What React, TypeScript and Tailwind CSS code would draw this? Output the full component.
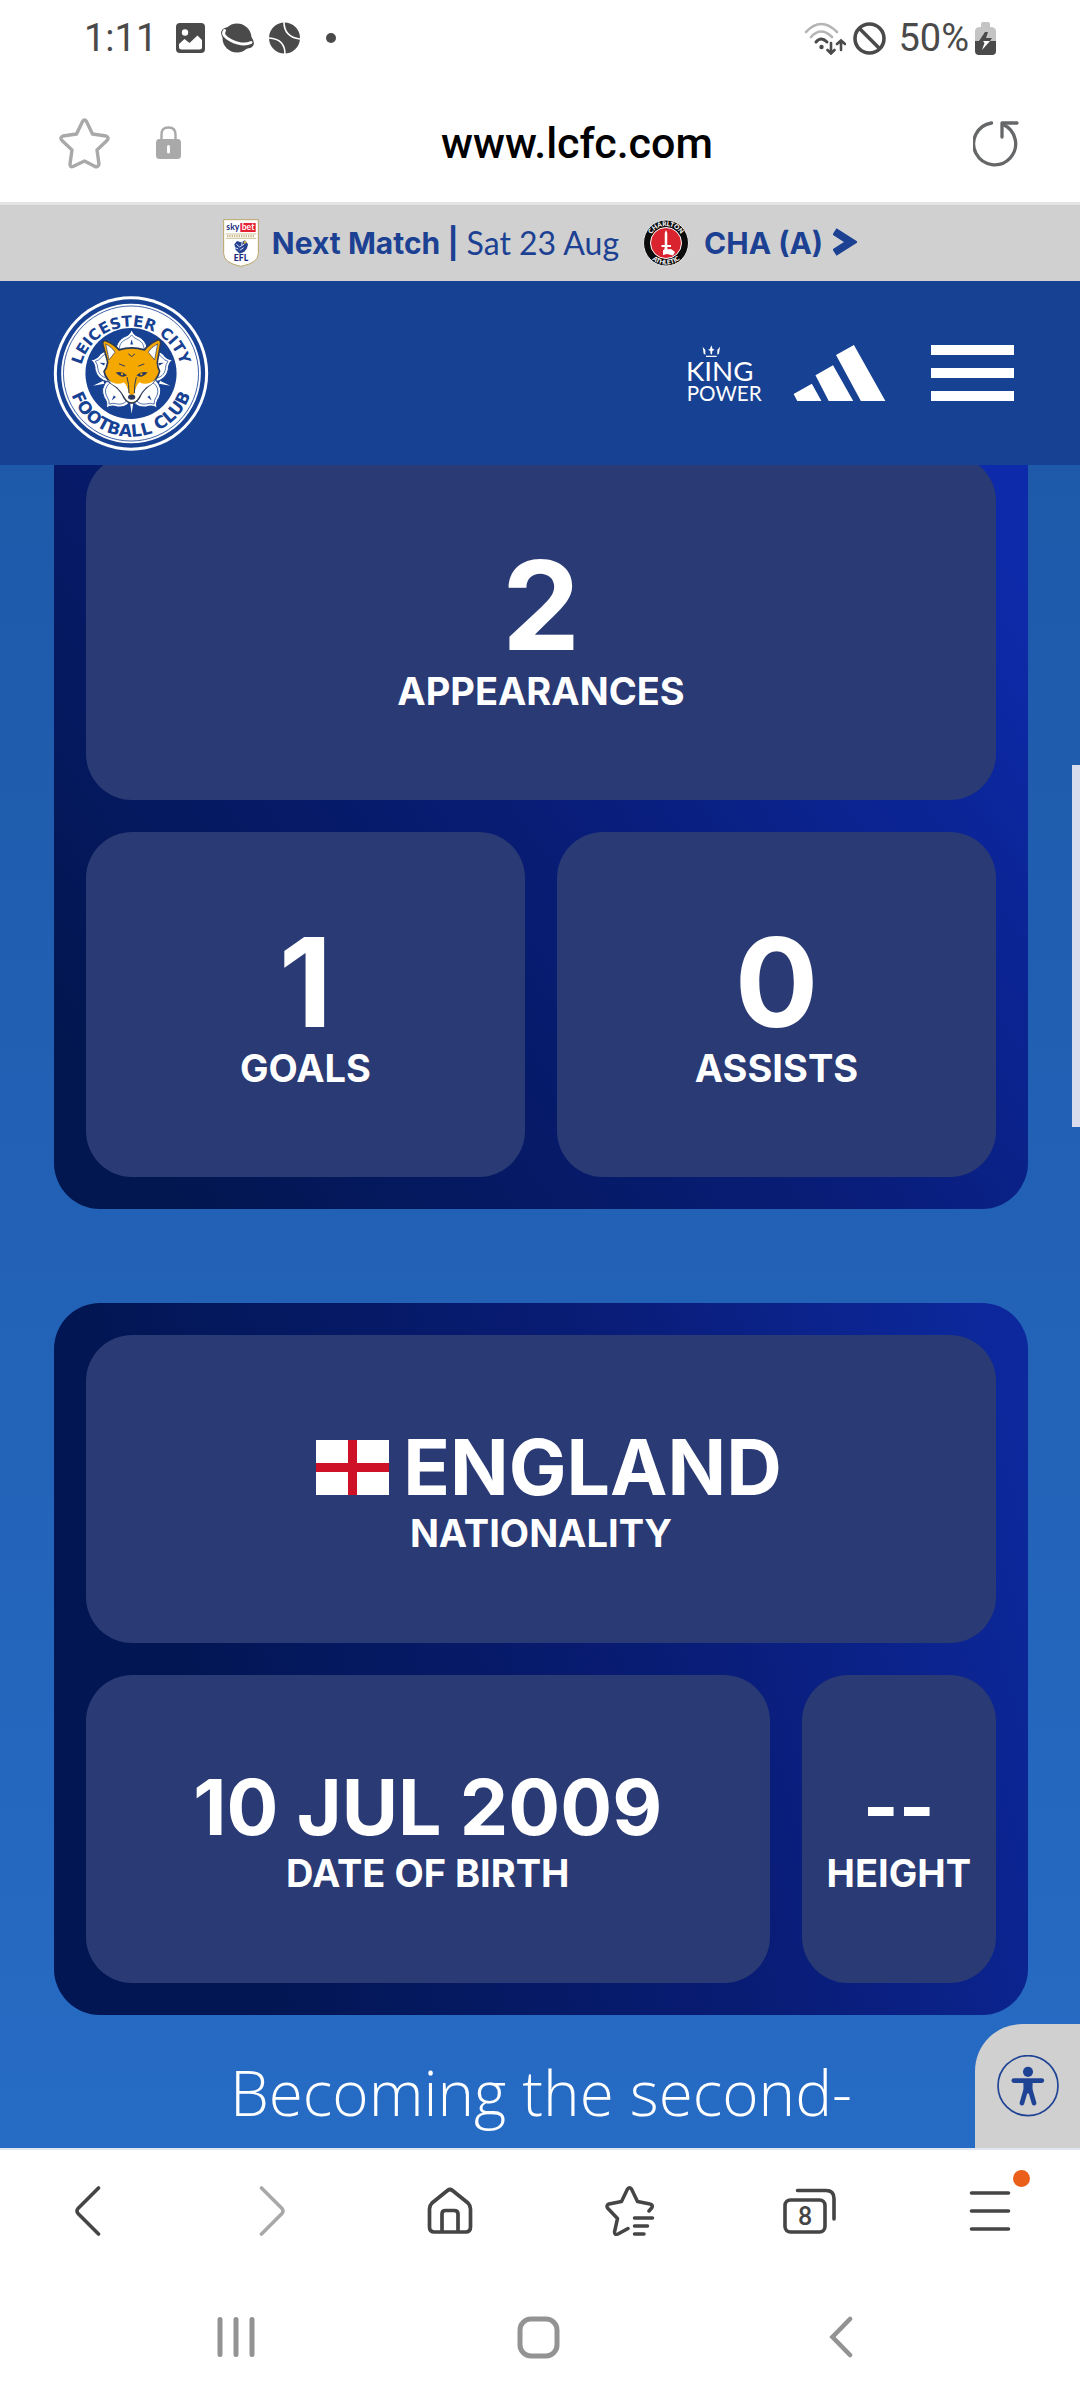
import type { ReactNode } from "react";

function StatusBar() {
  return (
    <div className="flex h-[84px] items-center justify-between bg-white pr-[84px] pb-2 pl-[84px] text-[38px] leading-none text-[#4a4a4a]">
      <div className="flex items-center">
        <span className="mr-[19px]">1:11</span>
        <svg width="29" height="30" viewBox="0 0 29 30" aria-hidden="true">
          <rect width="29" height="30" rx="4" fill="#4a4a4a" />
          <circle cx="9" cy="9.500" r="3.200" fill="#fff" />
          <path d="M3 21 L8.500 16 L13.500 20 L21.500 12.500 L26 17 V24 Q26 26.500 23.500 26.500 H5.500 Q3 26.500 3 24 Z" fill="#fff" />
        </svg>
        <svg className="ml-[14px]" width="37" height="32" viewBox="0 0 37 32" aria-hidden="true">
          <circle cx="18" cy="16" r="14.500" fill="#4a4a4a" />
          <ellipse cx="18.500" cy="16" rx="17.500" ry="9" transform="rotate(24 18.500 16)" fill="#4a4a4a" />
          <path d="M5.500 8.500 Q2 13.500 12 18.500 Q24 24.500 32 20.500" fill="none" stroke="#fff" strokeWidth="3" strokeLinecap="round" />
        </svg>
        <svg className="ml-[13px]" width="31" height="32" viewBox="0 0 31 32" aria-hidden="true">
          <circle cx="15.500" cy="16" r="15.500" fill="#4a4a4a" />
          <path d="M15 0 Q15 15 31 17 M0 16 Q16 17 16 32" fill="none" stroke="#fff" strokeWidth="1.600" />
        </svg>
        <span className="ml-[26px] size-[10px] rounded-full bg-[#4a4a4a]" />
      </div>
      <div className="flex items-center">
        <svg width="42" height="33" viewBox="0 0 42 33" fill="none" strokeLinecap="round" aria-hidden="true">
          <path d="M2 10 Q17 -6 33 10" stroke="#b5b5b5" strokeWidth="2.600" />
          <path d="M7 15 Q17 4 28 15" stroke="#b5b5b5" strokeWidth="2.600" />
          <path d="M12 20 Q17 14 23 20" stroke="#4a4a4a" strokeWidth="3" />
          <circle cx="17.500" cy="25" r="2.200" fill="#4a4a4a" />
          <path d="M27 21 V31 M23.500 28 L27 31.500 L30.500 28 M37 28 V19 M33 22 L37 18.500 L41 22" stroke="#4a4a4a" strokeWidth="2.600" />
        </svg>
        <svg className="ml-[7px]" width="33" height="33" viewBox="0 0 33 33" fill="none" stroke="#4a4a4a" strokeWidth="3.600" aria-hidden="true">
          <circle cx="16.500" cy="16.500" r="14.500" />
          <path d="M6 6 L27 27" />
        </svg>
        <span className="mr-[6px] ml-[12px]">50%</span>
        <svg width="21" height="33" viewBox="0 0 21 33" aria-hidden="true">
          <path d="M6 5 V2 Q6 0 8 0 H13 Q15 0 15 2 V5 Q21 5 21 9 V19 H0 V9 Q0 5 6 5Z" fill="#c4c4c4" />
          <path d="M0 19 H21 V29 Q21 33 17 33 H4 Q0 33 0 29Z" fill="#4a4a4a" />
          <path d="M10 10 H13 L11 16 H17 L15 19 H4Z" fill="#4a4a4a" />
          <path d="M8 19 H15 L7 28 L9.500 21Z" fill="#fff" />
        </svg>
      </div>
    </div>
  );
}

function AddressBar() {
  return (
    <div className="flex h-[118px] items-center bg-white pr-[61px] pl-[59px]">
      <button type="button" aria-label="Bookmark page">
        <svg width="51" height="51" viewBox="0 0 51 51" fill="none" stroke="#a9a9a9" strokeWidth="3.400" strokeLinejoin="round" aria-hidden="true">
          <path d="M23.500 3.500 Q25.500 0.500 27.500 3.500 L33.500 16 L47 18 Q50.500 19.500 48 22.500 L38 32 L40 46 Q39.500 49.500 36 48.500 L25.500 43 L14 48.500 Q11 49.500 11 46 L13 32 L3 22.500 Q0.500 19.500 4 18 L17.500 16 Z" />
        </svg>
      </button>
      <svg className="ml-[46px]" width="25" height="34" viewBox="0 0 25 34" aria-hidden="true">
        <path d="M5.500 14 V8.500 Q5.500 1.500 12.500 1.500 Q19.500 1.500 19.500 8.500 V14" fill="none" stroke="#a9a9a9" strokeWidth="2.400" />
        <rect y="13" width="25" height="20" rx="3.500" fill="#a9a9a9" />
        <path d="M12.500 20.500 V26" stroke="#fff" strokeWidth="3" strokeLinecap="round" />
      </svg>
      <input
        aria-label="Address"
        defaultValue="www.lcfc.com"
        className="min-w-0 flex-1 bg-transparent text-center text-[43px] leading-none font-medium text-black outline-none"
      />
      <button type="button" aria-label="Reload">
        <svg width="46" height="47" viewBox="0 0 46 47" fill="none" stroke="#666769" strokeWidth="3.300" strokeLinecap="round" strokeLinejoin="round" aria-hidden="true">
          <path d="M18.500 3 A21 21 0 1 0 30 4.500" />
          <path d="M44 3 H29 V17" />
        </svg>
      </button>
    </div>
  );
}

function EflBadge() {
  return (
    <svg width="36" height="48" viewBox="28 26 108 144" aria-label="Sky Bet EFL" role="img">
      <path d="M30 28 H134 V130 Q134 158 82 168 Q30 158 30 130 Z" fill="#fff" stroke="#b9a468" strokeWidth="3" />
      <rect x="80" y="38" width="46" height="27" fill="#e5212f" />
      <text x="38" y="60" fontSize="26" fontWeight="700" fill="#1a2a7c" fontFamily="Lato, sans-serif">sky</text>
      <text x="84" y="60" fontSize="26" fontWeight="700" fill="#fff" fontFamily="Lato, sans-serif">bet</text>
      <path d="M36 71 H128 M36 84 H128" stroke="#b9a468" strokeWidth="2" />
      <path d="M40 77.500 H124" stroke="#cbbb8c" strokeWidth="7" strokeDasharray="4 3" />
      <path d="M62 102 L70 92 L82 96 L94 90 L103 102 L100 114 L92 124 L78 130 L66 118Z" fill="#24408f" />
      <path d="M68 102 L78 110 L92 101 M78 120 L90 112 M64 112 L74 116 M86 92 L84 104" fill="none" stroke="#dfe6f5" strokeWidth="3" />
      <circle cx="94" cy="96" r="4" fill="#d6b13b" />
      <text x="82" y="153" textAnchor="middle" fontSize="26" fontWeight="900" fill="#1a2a7c" fontFamily="Lato, sans-serif">EFL</text>
    </svg>
  );
}

function CharltonBadge() {
  return (
    <svg width="46" height="48" viewBox="0 0 92 96" aria-label="Charlton Athletic" role="img">
      <ellipse cx="46" cy="48" rx="45" ry="46" fill="#0c0c0c" stroke="#e8e8e8" strokeWidth="2" />
      <circle cx="46" cy="48" r="31" fill="#d9232e" stroke="#fff" strokeWidth="2" />
      <path d="M46 22 L48.500 28 V52 H56 V56 H48.500 L50 64 H42 L43.500 56 H37 V52 H43.500 V28Z" fill="#fff" />
      <path d="M40 62 L56 60 L64 66 L60 73 L48 70 L40 72Z" fill="#fff" />
      <path id="charltonTop" d="M12 48 A34 34 0 0 1 80 48" fill="none" />
      <path id="charltonBottom" d="M3 48 A43 43 0 0 0 89 48" fill="none" />
      <g fontFamily="Lato, sans-serif" fontSize="13" fontWeight="900" fill="#fff" textAnchor="middle">
        <text><textPath href="#charltonTop" startOffset="50%">CHARLTON</textPath></text>
        <text><textPath href="#charltonBottom" startOffset="50%">ATHLETIC</textPath></text>
      </g>
    </svg>
  );
}

function NextMatchBar() {
  return (
    <a href="#next-match" className="flex h-[79px] items-center justify-center border-t-[3px] border-[#e4e4e4] bg-[#d0d0d0] text-[#1c4193]">
      <EflBadge />
      <span className="ml-[13px] font-[Inter,sans-serif] text-[30px] leading-[40px] font-bold">Next Match |</span>
      <span className="ml-[8px] font-[Lato,sans-serif] text-[32px] leading-[40px]">Sat 23 Aug</span>
      <span className="mr-[15px] ml-[24px]"><CharltonBadge /></span>
      <span className="font-[Inter,sans-serif] text-[30px] leading-[40px] font-bold">CHA (A)</span>
      <svg className="ml-[10px]" width="24" height="30" viewBox="0 0 24 30" fill="none" stroke="#1c4193" strokeWidth="7.500" aria-hidden="true">
        <path d="M1.500 3.500 L18 14 L1.500 24.500" />
      </svg>
    </a>
  );
}

function ClubCrest() {
  return (
    <svg width="156" height="155" viewBox="70 46 468 466" aria-label="Leicester City Football Club" role="img">
      <circle cx="304" cy="279" r="232" fill="#fff" />
      <circle cx="304" cy="279" r="223" fill="#174193" />
      <circle cx="304" cy="279" r="210" fill="#fff" />
      <circle cx="304" cy="279" r="203" fill="none" stroke="#174193" strokeWidth="2.500" />
      <circle cx="304" cy="279" r="137" fill="#174193" />
      <path id="crestTop" d="M150 292 A154 154 0 1 1 458 292" fill="none" />
      <path id="crestBottom" d="M114 279 A190 190 0 0 0 494 279" fill="none" />
      <g fontFamily="DejaVu Sans, sans-serif" fontWeight="700" fill="#174193" textAnchor="middle">
        <text fontSize="46"><textPath href="#crestTop" startOffset="50%">LEICESTER CITY</textPath></text>
        <text fontSize="51"><textPath href="#crestBottom" startOffset="50%">FOOTBALL CLUB</textPath></text>
      </g>
      {[0, 72, 144, 216, 288].map((angle) => (
        <g key={angle} transform={`rotate(${angle} 306 278)`}>
          <path d="M306 278 C248 240 248 190 282 170 Q300 165 306 148 Q312 165 330 170 C364 190 364 240 306 278Z" fill="#fff" stroke="#174193" strokeWidth="3" />
          <path d="M272 222 C264 200 272 184 288 177 Q300 173 306 163 Q312 173 324 177 C340 184 348 200 340 222" fill="none" stroke="#174193" strokeWidth="2" />
          <path d="M306 176 L310 192 L302 192Z" fill="#174193" />
        </g>
      ))}
      {[36, 108, 180, 252, 324].map((angle) => (
        <path key={angle} transform={`rotate(${angle} 306 278)`} d="M306 156 L311 190 H301Z" fill="#fff" />
      ))}
      <path d="M268 208 Q306 196 344 208 Q358 190 384 178 Q394 176 393 190 L383 245 Q384 262 390 272 Q384 300 352 320 Q335 335 329 352 Q318 368 306 368 Q294 368 283 352 Q277 335 260 320 Q228 300 223 273 Q232 262 234 245 L219 190 Q219 176 232 182 Q255 192 268 208Z" fill="#f5a800" stroke="#2b3a5c" strokeWidth="5" />
      <path d="M228 190 L238 238 L256 215 Q248 200 228 190Z M384 190 L375 238 L356 215 Q364 200 384 190Z" fill="#fff" stroke="#2b3a5c" strokeWidth="2" />
      <path d="M234 298 Q262 318 282 305 Q292 312 298 338 Q306 350 314 338 Q320 312 330 305 Q350 318 380 296 Q368 312 350 320 Q334 335 326 352 Q318 365 306 365 Q294 365 286 352 Q278 335 262 320 Q244 312 234 298Z" fill="#fff" />
      <path d="M296 300 H317 L314 342 H299Z" fill="#f5a800" />
      <path d="M258 276 Q276 270 292 284 Q276 296 258 276Z M354 276 Q336 270 320 284 Q336 296 354 276Z" fill="#2b3a5c" />
      <circle cx="277" cy="281" r="3.500" fill="#f5a800" />
      <circle cx="335" cy="281" r="3.500" fill="#f5a800" />
      <path d="M292 290 Q298 310 298 338 M320 290 Q314 310 314 338 M296 220 L306 228 L316 220 M268 250 L286 257 M344 250 L326 257" fill="none" stroke="#2b3a5c" strokeWidth="3" />
      <ellipse cx="306" cy="350" rx="11" ry="8" fill="#2b3a5c" />
    </svg>
  );
}

function KingPowerLogo() {
  return (
    <svg className="overflow-visible" width="75" height="58" viewBox="84 72 225 174" fill="#fff" aria-label="King Power" role="img">
      <path d="M128 80 L136 90 V104 L131 101Z M180 80 L172 90 V104 L177 101Z M154 76 L158 87 L164 89 L157 93 L156 103 H152 L151 93 L144 89 L150 87Z M138 107 H170 V111 H138Z" />
      <text x="78" y="184" fontFamily="Lato, sans-serif" fontSize="83">KING</text>
      <text x="80" y="243" fontFamily="Lato, sans-serif" fontSize="62">POWER</text>
    </svg>
  );
}

function SiteHeader() {
  return (
    <header className="relative z-10 flex h-[184px] items-center bg-[#174193] pr-[66px] pl-[53px]">
      <a href="#home" className="mr-auto"><ClubCrest /></a>
      <a href="#king-power"><KingPowerLogo /></a>
      <a href="#adidas" className="ml-[30px]">
        <svg width="93" height="56" viewBox="399 74 279 169" fill="#fff" aria-label="adidas" role="img">
          <path d="M400 222 L455 191 L484 243 H411Z M466 165 L519 135 L580 243 H506Z M528 104 L582 74 L677 243 H603Z" />
        </svg>
      </a>
      <button type="button" aria-label="Open menu" className="ml-[45px] flex w-[83px] flex-col gap-[13px]">
        <span className="h-[10px] w-full bg-white" />
        <span className="h-[10px] w-full bg-white" />
        <span className="h-[10px] w-full bg-white" />
      </button>
    </header>
  );
}

function CountTile({ value, label, wide = false }: { value: string; label: string; wide?: boolean }) {
  return (
    <div className={`flex flex-col items-center rounded-[46px] bg-[#293a74] pt-[88px] pb-[85px] ${wide ? "col-span-2" : ""}`}>
      <dd className="text-[124px] leading-[124px]">{value}</dd>
      <dt className="text-[38px] leading-[48px]">{label}</dt>
    </div>
  );
}

function FactTile({ value, label, className }: { value: ReactNode; label: string; className: string }) {
  return (
    <div className={`flex flex-col items-center rounded-[46px] bg-[#293a74] pt-[91px] pb-[86px] ${className}`}>
      <dd className="flex items-center text-[77px] leading-[83px]">{value}</dd>
      <dt className="text-[38px] leading-[48px]">{label}</dt>
    </div>
  );
}

function EnglandFlag() {
  return (
    <svg className="mr-[14px] ml-[16px]" width="73" height="55" viewBox="0 0 73 55" aria-hidden="true">
      <rect width="73" height="55" fill="#fff" />
      <path d="M32 0 H41 V55 H32Z M0 23 H73 V32 H0Z" fill="#ce1126" />
    </svg>
  );
}

function PlayerProfile() {
  return (
    <main className="relative -mt-[42px] flex-1 overflow-hidden bg-linear-to-b from-[#1e59a9] to-[#266bc4] pr-[52px] pb-[18px] pl-[54px] text-white">
      <dl className="grid grid-cols-2 gap-8 rounded-[46px] bg-[linear-gradient(54deg,#021650_8%,#081c74_48%,#0d2aaa_92%)] p-8 font-[Inter,sans-serif] font-bold">
        <CountTile wide value="2" label="APPEARANCES" />
        <CountTile value="1" label="GOALS" />
        <CountTile value="0" label="ASSISTS" />
      </dl>
      <dl className="mt-[94px] flex flex-wrap gap-8 rounded-[46px] bg-[linear-gradient(75deg,#021653_18%,#091c76_62%,#0c289c_96%)] p-8 font-[Inter,sans-serif] font-bold">
        <FactTile className="w-full" label="NATIONALITY" value={<><EnglandFlag />ENGLAND</>} />
        <FactTile className="flex-1" label="DATE OF BIRTH" value="10 JUL 2009" />
        <FactTile className="px-[25px]" label="HEIGHT" value="--" />
      </dl>
      <p className="mt-[39px] text-center font-['Open_Sans',sans-serif] text-[62px] leading-[76px] font-light">
        Becoming the second-
      </p>
      <div className="absolute top-[342px] right-0 h-[362px] w-[8px] bg-[#d9dcec]" />
      <button type="button" aria-label="Accessibility options" className="absolute right-0 bottom-0 flex h-[124px] w-[105px] items-center justify-center rounded-tl-[47px] bg-[#d0d0d0]">
        <svg width="62" height="62" viewBox="294 231 184 184" fill="none" stroke="#1f4394" strokeLinecap="round" aria-hidden="true">
          <circle cx="386" cy="322" r="89" strokeWidth="5" />
          <circle cx="386" cy="281" r="15" fill="#1f4394" stroke="none" />
          <path d="M344 307 H427" strokeWidth="14" />
          <path d="M372 303 H400 L399 345 H373Z" fill="#1f4394" stroke="none" />
          <path d="M379 336 L368 374 M393 336 L404 374" strokeWidth="14" />
        </svg>
      </button>
    </main>
  );
}

function ToolButton({ label, children, disabled }: { label: string; children: ReactNode; disabled?: boolean }) {
  return (
    <button type="button" aria-label={label} disabled={disabled} className="flex flex-1 items-center justify-center">
      {children}
    </button>
  );
}

function BrowserToolbar() {
  return (
    <nav aria-label="Browser" className="flex h-[124px] border-t-2 border-[#dfe6f0] bg-white text-[#454545]">
      <ToolButton label="Back">
        <svg width="30" height="50" viewBox="0 0 30 50" fill="none" stroke="currentColor" strokeWidth="3.600" strokeLinecap="round" strokeLinejoin="round">
          <path d="M23.500 2 L3 22.500 Q1 25 3 27.500 L23.500 48" />
        </svg>
      </ToolButton>
      <ToolButton label="Forward" disabled>
        <svg width="30" height="50" viewBox="-4 0 30 50" fill="none" stroke="#a8a8a8" strokeWidth="3.600" strokeLinecap="round" strokeLinejoin="round">
          <path d="M2.500 2 L23 22.500 Q25 25 23 27.500 L2.500 48" />
        </svg>
      </ToolButton>
      <ToolButton label="Home">
        <svg width="46" height="48" viewBox="0 0 46 48" fill="none" stroke="currentColor" strokeWidth="3.700" strokeLinejoin="round">
          <path d="M20.500 3.500 Q23 1.500 25.500 3.500 L41 16 Q43.500 18.500 43.500 22 V40 Q43.500 45 38.500 45 H7.500 Q2.500 45 2.500 40 V22 Q2.500 18.500 5 16 Z" />
          <path d="M15 45 V27 Q15 23.500 18.500 23.500 H27 Q31 23.500 31 27 V45" />
        </svg>
      </ToolButton>
      <ToolButton label="Bookmarks">
        <svg width="50" height="50" viewBox="0 0 50 50" fill="none" stroke="currentColor" strokeWidth="3.500" strokeLinecap="round" strokeLinejoin="round">
          <path d="M44 25 L47 21.500 Q48 18.500 45 18 L32.500 15.500 L26.500 3 Q24.500 0.500 22.500 3 L16.500 15.500 L4 18 Q1 19 2.500 22 L12.500 32.500 L9.500 46 Q9.500 49.500 13 48 L23 42.500" />
          <path d="M29.500 32 H47.500 M29.500 40 H42.500 M29.500 48 H39" />
        </svg>
      </ToolButton>
      <ToolButton label="Tabs, 8 open">
        <svg width="54" height="48" viewBox="0 0 54 48" fill="none" stroke="currentColor" strokeWidth="3.600" strokeLinecap="round">
          <rect x="2" y="13" width="40" height="32" rx="5.500" />
          <path d="M14.500 3.500 H43 Q51 3.500 51 11.500 V32" />
          <text x="22" y="38" textAnchor="middle" fontFamily="Roboto, sans-serif" fontSize="25" fontWeight="500" fill="currentColor" stroke="none">8</text>
        </svg>
      </ToolButton>
      <ToolButton label="Menu, new notification">
        <span className="relative">
          <svg width="42" height="40" viewBox="0 0 42 40" fill="none" stroke="currentColor" strokeWidth="3.600" strokeLinecap="round">
            <path d="M2.500 2 H39.500 M2.500 20 H39.500 M2.500 38 H39.500" />
          </svg>
          <span className="absolute -top-[21px] -right-[19px] size-[17px] rounded-full bg-[#ea5f1a]" />
        </span>
      </ToolButton>
    </nav>
  );
}

function SystemNav() {
  return (
    <nav aria-label="System" className="flex h-[128px] bg-white pt-[2px] pr-[88px] pl-[85px] text-[#939393]">
      <ToolButton label="Recent apps">
        <svg width="40" height="42" viewBox="0 0 40 42" fill="none" stroke="currentColor" strokeWidth="5" strokeLinecap="round">
          <path d="M4 3.500 V38.500 M20 3.500 V38.500 M36 3.500 V38.500" />
        </svg>
      </ToolButton>
      <ToolButton label="Home screen">
        <svg width="43" height="43" viewBox="0 0 43 43" fill="none" stroke="currentColor" strokeWidth="5">
          <rect x="3" y="3" width="37" height="37" rx="11" />
        </svg>
      </ToolButton>
      <ToolButton label="Go back">
        <svg width="24" height="42" viewBox="0 0 24 42" fill="none" stroke="currentColor" strokeWidth="4.600" strokeLinecap="round">
          <path d="M21 3 L3.500 21 L21 39" />
        </svg>
      </ToolButton>
    </nav>
  );
}

export default function App() {
  return (
    <div className="flex min-h-screen flex-col bg-white font-[Roboto,sans-serif]">
      <StatusBar />
      <AddressBar />
      <NextMatchBar />
      <SiteHeader />
      <PlayerProfile />
      <BrowserToolbar />
      <SystemNav />
    </div>
  );
}
